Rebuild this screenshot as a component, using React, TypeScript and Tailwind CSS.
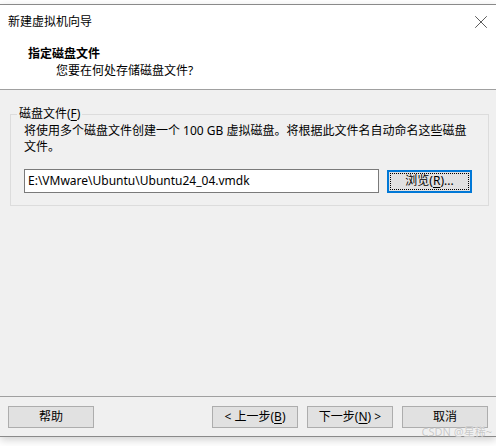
import { X } from 'lucide-react';

const ui = "font-['Segoe_UI','Noto_Sans','Noto_Sans_CJK_SC',sans-serif] text-[12px] text-black";

function WizButton({ label, u, before = '', tail = '' }: { label: string; u?: string; before?: string; tail?: string }) {
  return (
    <button className="h-[22px] w-[86px] border border-[#adadad] bg-[#e1e1e1] leading-[20px]">
      {before}
      {label}
      {u && (
        <>
          (<span className="underline underline-offset-2">{u}</span>)
        </>
      )}
      {tail}
    </button>
  );
}

export default function App() {
  return (
    <div className={`relative h-[446px] w-[496px] overflow-hidden bg-white ${ui}`}>
      {/* previous edge above window */}
      <div className="h-[4px] bg-white" />

      <div className="flex h-[433px] flex-col border-t border-b border-[#8a8a8a] shadow-[0_3px_8px_rgba(0,0,0,0.18)]">
        {/* Title bar */}
        <div className="flex h-[30px] items-center justify-between bg-white pl-[8px] pr-[4px] pt-[3px]">
          <span className="leading-none">新建虚拟机向导</span>
          <X className="h-[22px] w-[22px] text-[#111]" strokeWidth={0.75} />
        </div>

        {/* Header */}
        <div className="h-[55px] border-b border-[#a0a0a0] bg-white pl-[28px] pt-[10px]">
          <div className="font-bold leading-[17px]">指定磁盘文件</div>
          <div className="pl-[28px] leading-[18px]">您要在何处存储磁盘文件?</div>
        </div>

        {/* Body */}
        <div className="flex-1 bg-[#f0f0f0] pl-[10px] pr-[9px] pt-[16px]">
          <fieldset className="border border-[#dcdcdc] pb-[12px] pl-[13px] pr-[16px]">
            <legend className="-ml-[7px] px-[2px] leading-[16px]">
              磁盘文件(<span className="underline underline-offset-2">F</span>)
            </legend>
            <p className="mt-[1px] leading-[16px]">
              将使用多个磁盘文件创建一个 100 GB 虚拟磁盘。将根据此文件名自动命名这些磁盘
              <br />
              文件。
            </p>
            <div className="mt-[14px] flex items-center gap-[8px]">
              <div className="flex h-[24px] w-[355px] items-center border border-[#7a7a7a] bg-white pl-[3px]">
                E:\VMware\Ubuntu\Ubuntu24_04.vmdk
              </div>
              <button className="h-[23px] w-[85px] border-2 border-[#0078d7] bg-[#e1e1e1] p-[1px]">
                <span className="flex h-full w-full items-center justify-center outline-1 outline-dotted outline-black -outline-offset-1">
                  浏览(<span className="underline underline-offset-2">R</span>)...
                </span>
              </button>
            </div>
          </fieldset>
        </div>

        {/* Footer */}
        <div className="flex h-[40px] items-center border-t border-[#a0a0a0] bg-[#f0f0f0] pl-[8px] pr-[8px]">
          <WizButton label="帮助" />
          <div className="ml-auto flex gap-[9px]">
            <WizButton before="< " label="上一步" u="B" />
            <WizButton label="下一步" u="N" tail=" >" />
            <WizButton label="取消" />
          </div>
        </div>
      </div>

      {/* watermark */}
      <span className="absolute bottom-[6px] right-[4px] text-[11px] text-[#c8c8c8] [text-shadow:0_0_1px_white]">
        CSDN @星稀~
      </span>
    </div>
  );
}
